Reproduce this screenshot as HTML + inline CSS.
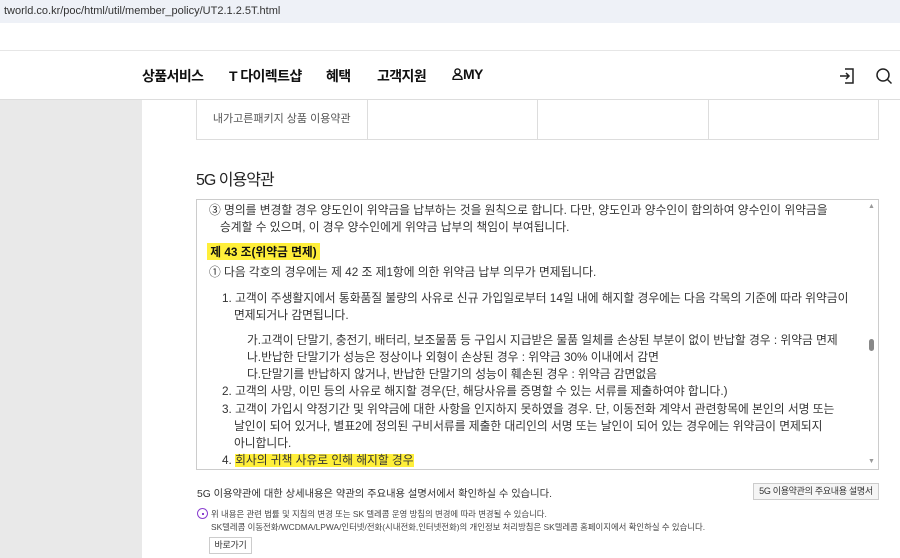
<!DOCTYPE html>
<html><head><meta charset="utf-8"><style>
*{margin:0;padding:0;box-sizing:border-box}
body{width:900px;height:558px;overflow:hidden;background:#fff;font-family:"Liberation Sans","Noto Sans CJK KR",sans-serif;color:#333;position:relative}
.url{position:absolute;left:0;top:0;width:900px;height:23px;background:#eef1f7;font-size:11px;color:#333;padding:5px 4px;}
.nav{position:absolute;left:0;top:50px;width:900px;height:50px;border-top:1px solid #e6e6e6;border-bottom:1px solid #ddd;}
.nav span{position:absolute;top:15px;font-size:14px;font-weight:bold;color:#111;letter-spacing:-0.6px}
.side{position:absolute;left:0;top:100px;width:142px;height:458px;background:#e9e9e9}
.tbl{position:absolute;left:196px;top:100px;width:683px;height:40px;border:1px solid #ddd;border-top:none;display:flex}
.tbl div{border-right:1px solid #ddd;flex:1;font-size:11px;color:#555;text-align:center;line-height:39px}
.tbl div:last-child{border-right:none}
h2{position:absolute;left:196px;top:166px;font-size:16px;font-weight:normal;color:#222;letter-spacing:-1px}
.box{position:absolute;left:196px;top:199px;width:683px;height:271px;border:1px solid #ccc;overflow:hidden}
.box p{position:absolute;font-size:11.75px;color:#333;white-space:nowrap;letter-spacing:0}
.hl{background:#ffef3a}
.sb{position:absolute;right:0;top:0;width:13px;height:269px;background:#fff}
.foot{position:absolute;font-size:10.5px;color:#444;white-space:nowrap}
.btn{position:absolute;border:1px solid #ccc;background:#f5f5f5;font-size:9px;color:#333;text-align:center;white-space:nowrap;letter-spacing:-0.3px}
</style></head><body>
<div class="url">tworld.co.kr/poc/html/util/member_policy/UT2.1.2.5T.html</div>
<div class="nav">
<span style="left:142px">상품서비스</span>
<span style="left:229px">T 다이렉트샵</span>
<span style="left:326px">혜택</span>
<span style="left:377px">고객지원</span>
<span style="left:452px"><svg width="11" height="12" viewBox="0 0 11 12" fill="none" stroke="#111" stroke-width="1.4" style="vertical-align:-1px"><circle cx="5.5" cy="3.5" r="2.6"/><path d="M1 11.5c0-3 2-4.5 4.5-4.5s4.5 1.5 4.5 4.5z"/></svg>MY</span>
<svg style="position:absolute;left:838px;top:16px" width="18" height="18" viewBox="0 0 18 18" fill="none" stroke="#222" stroke-width="1.5"><path d="M7 2h8v14H7M2 9h9M8 6l3 3-3 3"/></svg>
<svg style="position:absolute;left:875px;top:16px" width="18" height="18" viewBox="0 0 18 18" fill="none" stroke="#222" stroke-width="1.5"><circle cx="8" cy="8" r="6"/><path d="M12.5 12.5l4 4"/></svg>
</div>
<div class="side"></div>
<div class="tbl"><div>내가고른패키지 상품 이용약관</div><div></div><div></div><div></div></div>
<h2>5G 이용약관</h2>
<div class="box">
<p style="left:12px;top:1px">③ 명의를 변경할 경우 양도인이 위약금을 납부하는 것을 원칙으로 합니다. 다만, 양도인과 양수인이 합의하여 양수인이 위약금을</p>
<p style="left:23px;top:18px">승계할 수 있으며, 이 경우 양수인에게 위약금 납부의 책임이 부여됩니다.</p>
<p style="left:10px;top:43px;font-weight:bold;color:#111" class="hl">&nbsp;제 43 조(위약금 면제)&nbsp;</p>
<p style="left:12px;top:63px">① 다음 각호의 경우에는 제 42 조 제1항에 의한 위약금 납부 의무가 면제됩니다.</p>
<p style="left:25px;top:89px">1. 고객이 주생활지에서 통화품질 불량의 사유로 신규 가입일로부터 14일 내에 해지할 경우에는 다음 각목의 기준에 따라 위약금이</p>
<p style="left:37px;top:106px">면제되거나 감면됩니다.</p>
<p style="left:50px;top:131px">가.고객이 단말기, 충전기, 배터리, 보조물품 등 구입시 지급받은 물품 일체를 손상된 부분이 없이 반납할 경우 : 위약금 면제</p>
<p style="left:50px;top:148px">나.반납한 단말기가 성능은 정상이나 외형이 손상된 경우 : 위약금 30% 이내에서 감면</p>
<p style="left:50px;top:165px">다.단말기를 반납하지 않거나, 반납한 단말기의 성능이 훼손된 경우 : 위약금 감면없음</p>
<p style="left:25px;top:182px">2. 고객의 사망, 이민 등의 사유로 해지할 경우(단, 해당사유를 증명할 수 있는 서류를 제출하여야 합니다.)</p>
<p style="left:25px;top:200px">3. 고객이 가입시 약정기간 및 위약금에 대한 사항을 인지하지 못하였을 경우. 단, 이동전화 계약서 관련항목에 본인의 서명 또는</p>
<p style="left:37px;top:217px">날인이 되어 있거나, 별표2에 정의된 구비서류를 제출한 대리인의 서명 또는 날인이 되어 있는 경우에는 위약금이 면제되지</p>
<p style="left:37px;top:234px">아니합니다.</p>
<p style="left:25px;top:251px">4. <span class="hl">회사의 귀책 사유로 인해 해지할 경우</span></p>
<div class="sb"><div style="position:absolute;left:3px;top:3px;font-size:7px;color:#999">▲</div><div style="position:absolute;left:4px;top:139px;width:5px;height:12px;border-radius:3px;background:#888"></div><div style="position:absolute;left:3px;top:258px;font-size:7px;color:#999">▼</div></div>
</div>
<div class="foot" style="left:197px;top:485px;font-size:10.3px;color:#333">5G 이용약관에 대한 상세내용은 약관의 주요내용 설명서에서 확인하실 수 있습니다.</div>
<div class="btn" style="left:753px;top:483px;width:126px;height:17px;line-height:15px">5G 이용약관의 주요내용 설명서</div>
<div style="position:absolute;left:197px;top:508px;width:11px;height:11px;border:1px solid #8a3fd0;border-radius:50%"><div style="position:absolute;left:4px;top:4px;width:2px;height:2px;background:#8a3fd0"></div></div>
<div class="foot" style="left:211px;top:508px;font-size:8.4px">위 내용은 관련 법률 및 지침의 변경 또는 SK 텔레콤 운영 방침의 변경에 따라 변경될 수 있습니다.</div>
<div class="foot" style="left:211px;top:521px;font-size:8.4px">SK텔레콤 이동전화/WCDMA/LPWA/인터넷/전화(시내전화,인터넷전화)의 개인정보 처리방침은 SK텔레콤 홈페이지에서 확인하실 수 있습니다.</div>
<div class="btn" style="left:209px;top:537px;width:43px;height:17px;line-height:15px;background:#fff">바로가기</div>
</body></html>
